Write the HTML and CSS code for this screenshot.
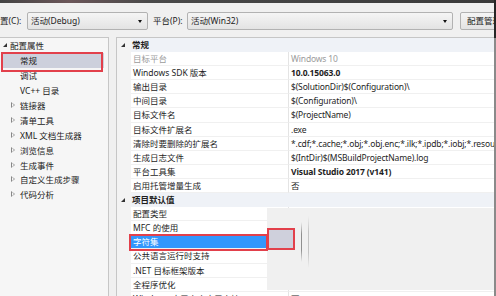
FILE: index.html
```html
<!DOCTYPE html>
<html lang="zh-CN">
  <head>
    <meta charset="UTF-8" />
    <meta name="viewport" content="width=device-width, initial-scale=1.0" />
    <title>属性页</title>
    <link rel="stylesheet" href="styles.css">
  </head>
  <body>
    <div class="frame">
      <div class="window">
        <div class="titlebar"></div>

        <!-- 配置 / 平台 -->
        <div class="toolbar">
          <span class="label label-config">置(C):</span>
          <div class="combo combo-config">活动(Debug)<span class="arrow"></span></div>
          <span class="label label-platform">平台(P):</span>
          <div class="combo combo-platform">活动(Win32)<span class="arrow"></span></div>
          <button class="btn">配置管理器(O)...</button>
        </div>

        <div class="main">
          <!-- 左侧树 -->
          <ul class="tree">
            <li class="node top"><span class="twisty open"></span>配置属性</li>
            <li class="node leaf selected">常规</li>
            <li class="node leaf">调试</li>
            <li class="node leaf">VC++ 目录</li>
            <li class="node child"><span class="twisty closed"></span>链接器</li>
            <li class="node child"><span class="twisty closed"></span>清单工具</li>
            <li class="node child"><span class="twisty closed"></span>XML 文档生成器</li>
            <li class="node child"><span class="twisty closed"></span>浏览信息</li>
            <li class="node child"><span class="twisty closed"></span>生成事件</li>
            <li class="node child"><span class="twisty closed"></span>自定义生成步骤</li>
            <li class="node child"><span class="twisty closed"></span>代码分析</li>
            <span class="mark mark-tree"></span>
          </ul>

          <!-- 属性表 -->
          <div class="grid">
            <div class="row cat"><span class="gutter"><span class="twisty open"></span></span><span class="cat-name">常规</span></div>
            <div class="row"><span class="gutter"></span><span class="name dim">目标平台</span><span class="value dim">Windows 10</span></div>
            <div class="row"><span class="gutter"></span><span class="name">Windows SDK 版本</span><span class="value bold">10.0.15063.0</span></div>
            <div class="row"><span class="gutter"></span><span class="name">输出目录</span><span class="value">$(SolutionDir)$(Configuration)\</span></div>
            <div class="row"><span class="gutter"></span><span class="name">中间目录</span><span class="value">$(Configuration)\</span></div>
            <div class="row"><span class="gutter"></span><span class="name">目标文件名</span><span class="value">$(ProjectName)</span></div>
            <div class="row"><span class="gutter"></span><span class="name">目标文件扩展名</span><span class="value">.exe</span></div>
            <div class="row"><span class="gutter"></span><span class="name">清除时要删除的扩展名</span><span class="value">*.cdf;*.cache;*.obj;*.obj.enc;*.ilk;*.ipdb;*.iobj;*.resources;*.tlb</span></div>
            <div class="row"><span class="gutter"></span><span class="name">生成日志文件</span><span class="value">$(IntDir)$(MSBuildProjectName).log</span></div>
            <div class="row"><span class="gutter"></span><span class="name">平台工具集</span><span class="value bold">Visual Studio 2017 (v141)</span></div>
            <div class="row"><span class="gutter"></span><span class="name">启用托管增量生成</span><span class="value">否</span></div>
            <div class="row cat"><span class="gutter"><span class="twisty open"></span></span><span class="cat-name">项目默认值</span></div>
            <div class="row"><span class="gutter"></span><span class="name">配置类型</span><span class="value">应用程序(.exe)</span></div>
            <div class="row"><span class="gutter"></span><span class="name">MFC 的使用</span><span class="value">使用标准 Windows 库</span></div>
            <div class="row sel"><span class="gutter"></span><span class="name">字符集</span><span class="value">使用 Unicode 字符集</span></div>
            <div class="row"><span class="gutter"></span><span class="name">公共语言运行时支持</span><span class="value">无公共语言运行时支持</span></div>
            <div class="row"><span class="gutter"></span><span class="name">.NET 目标框架版本</span><span class="value"></span></div>
            <div class="row"><span class="gutter"></span><span class="name">全程序优化</span><span class="value">无全程序优化</span></div>
            <div class="row"><span class="gutter"></span><span class="name">Windows 应用商店应用支持</span><span class="value">否</span></div>

            <!-- 下拉残影 -->
            <div class="overlay">
              <span class="shade shade-a"></span>
              <span class="shade shade-b"></span>
            </div>
            <span class="mark mark-row"></span>
            <span class="mark mark-drop"></span>
          </div>
        </div>
      </div>
      <div class="edge"></div>
    </div>
  </body>
</html>
```

FILE: styles.css
```css
body {
  margin: 0;
  width: 496px;
  height: 296px;
  overflow: hidden;
  background: #f0f0f0;
  font-family: "Noto Sans", "Noto Sans CJK SC", sans-serif;
  font-size: 8.5px;
  color: #1e1e1e;
}

.frame {
  display: flex;
  height: 296px;
}

.window {
  width: 494px;
  overflow: hidden;
  display: flex;
  flex-direction: column;
}

/* 右侧窗口边 */
.edge {
  width: 2px;
  background: linear-gradient(#262626 0 38px, #8a8a8a 38px);
}

.titlebar {
  height: 3px;
  background: linear-gradient(90deg, #444, #6b5659 14%, #4a4a4a 30%, #3a3a3a);
}

/* 顶部工具条 */
.toolbar {
  height: 34px;
  box-sizing: border-box;
  padding-top: 9px;
  display: flex;
  align-items: flex-start;
  white-space: nowrap;
}

.label {
  line-height: 18px;
  color: #222;
  flex-shrink: 0;
}

.label-config {
  width: 27px;
}

.label-platform {
  width: 34px;
  padding-left: 5px;
}

.combo {
  position: relative;
  flex-shrink: 0;
  height: 18px;
  box-sizing: border-box;
  border: 1px solid #b2b2b2;
  border-radius: 2px;
  background: linear-gradient(#f5f5f5, #e3e3e3);
  line-height: 16px;
  padding-left: 3px;
  color: #222;
}

.combo-config {
  width: 121px;
}

.combo-platform {
  width: 266px;
}

.arrow {
  position: absolute;
  right: 5px;
  top: 7px;
  border-left: 2.5px solid transparent;
  border-right: 2.5px solid transparent;
  border-top: 3px solid #111;
}

.btn {
  flex-shrink: 0;
  margin-left: 7px;
  height: 18px;
  padding: 0 6px;
  border: 1px solid #b2b2b2;
  border-radius: 2px;
  background: linear-gradient(#f5f5f5, #e3e3e3);
  font: inherit;
  line-height: 16px;
  color: #222;
}

.main {
  flex: 1;
  display: flex;
  gap: 7px;
  min-height: 0;
}

/* 左侧树 */
.tree {
  position: relative;
  list-style: none;
  margin: 0;
  padding: 0;
  width: 109px;
  box-sizing: border-box;
  border-top: 1px solid #c6c6c6;
  border-right: 1px solid #c6c6c6;
  background: #f6f6f6;
}

.node {
  display: flex;
  align-items: center;
  height: 14.9px;
  white-space: nowrap;
  color: #222;
}

.node.top {
  padding-left: 3px;
}

.node.leaf {
  padding-left: 20px;
}

.node.child {
  padding-left: 11px;
}

.node.selected {
  background: #cdd0dc;
  margin: 0 4px 0 2px;
  padding-left: 18px;
}

.twisty {
  display: inline-block;
  flex-shrink: 0;
}

.twisty.open {
  width: 0;
  height: 0;
  border-right: 4px solid #333;
  border-top: 4px solid transparent;
  margin-right: 3px;
}

.twisty.closed {
  position: relative;
  width: 0;
  height: 0;
  border-left: 4px solid #888;
  border-top: 3.5px solid transparent;
  border-bottom: 3.5px solid transparent;
  margin-right: 5px;
}

.twisty.closed::after {
  content: "";
  position: absolute;
  left: -3.2px;
  top: -2px;
  border-left: 2.2px solid #f6f6f6;
  border-top: 2px solid transparent;
  border-bottom: 2px solid transparent;
}

/* 属性表 */
.grid {
  position: relative;
  flex: 1;
  border-top: 1px solid #c6c6c6;
  border-left: 1px solid #c6c6c6;
  background: #f3f3f3;
  overflow: hidden;
}

.row {
  display: flex;
  height: 14.1px;
  line-height: 14px;
  white-space: nowrap;
}

.gutter {
  width: 14px;
  flex-shrink: 0;
  display: flex;
  align-items: center;
  justify-content: center;
  background: #f3f3f3;
}

.gutter .twisty.open {
  margin: 0 0 0 -2px;
}

.name {
  width: 158px;
  flex-shrink: 0;
  padding-left: 2px;
  box-sizing: border-box;
  border-right: 1px solid #e4e4e4;
  border-bottom: 1px solid #f0f0f0;
  background: #fff;
  overflow: hidden;
}

.value {
  flex: 1;
  padding-left: 2px;
  border-bottom: 1px solid #f0f0f0;
  background: #fff;
  overflow: hidden;
  letter-spacing: -0.15px;
}

.cat-name {
  flex: 1;
  padding-left: 1px;
  font-weight: bold;
  background: #eff2f7;
}

.dim {
  color: #9b9b9b;
}

.bold {
  font-weight: bold;
}

.row.sel .name {
  background: #3297fd;
  color: #fff;
}

.overlay {
  position: absolute;
  left: 150px;
  top: 170px;
  width: 230px;
  height: 82px;
  background: #f0f0f0;
}

.shade {
  position: absolute;
  width: 1px;
}

.shade-a {
  left: 34px;
  top: 14px;
  height: 40px;
  background: linear-gradient(rgba(140, 140, 140, 0), #8f8f8f 30%, #8f8f8f 70%, rgba(140, 140, 140, 0));
}

.shade-b {
  left: 41px;
  top: 8px;
  height: 52px;
  background: linear-gradient(rgba(190, 190, 190, 0), #c4c4c4 30%, #c4c4c4 70%, rgba(190, 190, 190, 0));
}

/* 红色标注框 */
.mark {
  position: absolute;
  box-sizing: border-box;
  border: 2px solid #e2404b;
}

.mark-tree {
  left: 1px;
  top: 14px;
  width: 102px;
  height: 20px;
}

.mark-row {
  left: 12px;
  top: 196px;
  width: 139px;
  height: 17px;
}

.mark-drop {
  left: 150px;
  top: 190px;
  width: 28px;
  height: 22px;
  background: #cfd0dc;
}
```
